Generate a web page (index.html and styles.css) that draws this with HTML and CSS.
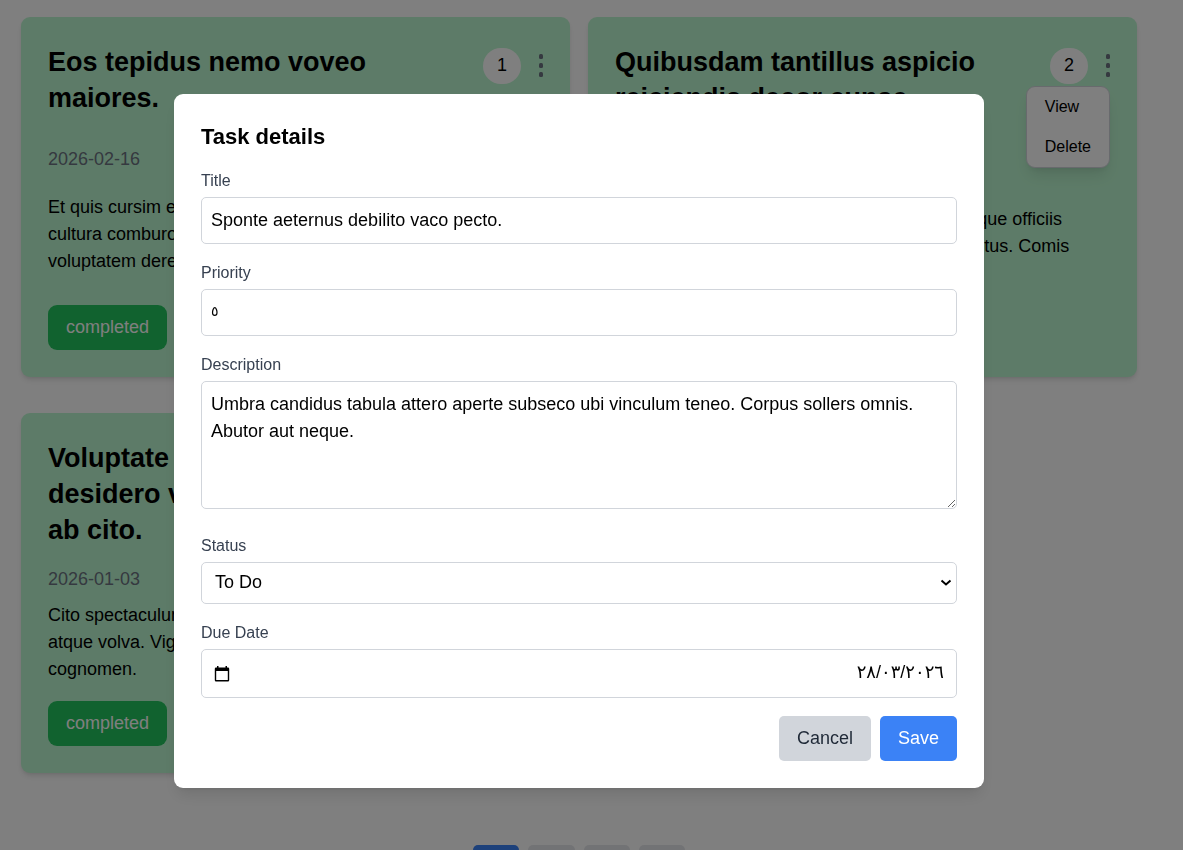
FILE: index.html
```html
<!DOCTYPE html>
<html lang="en">
<head>
<meta charset="utf-8">
<meta name="viewport" content="width=device-width, initial-scale=1">
<title>Tasks</title>
<link rel="stylesheet" href="styles.css">
</head>
<body>
<main class="page">
  <section class="task-grid">
    <article class="card">
      <header class="card-header">
        <h2 class="card-title">Eos tepidus nemo voveo maiores.</h2>
        <div class="card-tools">
          <span class="badge">1</span>
          <button class="dots" type="button" aria-label="Task menu"><svg width="4" height="24" viewBox="0 0 4 24"><rect y="0" width="4" height="5" rx="1.500"/><rect y="9" width="4" height="5" rx="1.500"/><rect y="18" width="4" height="5" rx="1.500"/></svg></button>
        </div>
      </header>
      <time class="card-date">2026-02-16</time>
      <p class="card-text">Et quis cursim earum traho spero tabesco commodi acsi<br>cultura comburo vestrum aliquid tamen depono<br>voluptatem deregmo.</p>
      <button class="status" type="button">completed</button>
    </article>
    <article class="card">
      <header class="card-header">
        <h2 class="card-title">Quibusdam tantillus aspicio reiciendis decor cunae defluo.</h2>
        <div class="card-tools">
          <span class="badge">2</span>
          <button class="dots" type="button" aria-label="Task menu" aria-expanded="true"><svg width="4" height="24" viewBox="0 0 4 24"><rect y="0" width="4" height="5" rx="1.500"/><rect y="9" width="4" height="5" rx="1.500"/><rect y="18" width="4" height="5" rx="1.500"/></svg></button>
          <div class="menu">
            <button class="menu-item" type="button">View</button>
            <button class="menu-item" type="button">Delete</button>
          </div>
        </div>
      </header>
      <time class="card-date">2026-01-21</time>
      <p class="card-text">Corporis vulgivagus creo aut auditor tersus atque officiis<br>tabula demergo ambo cupio vinitor adfectus totus. Comis<br>stultus verbera.</p>
      <button class="status" type="button">completed</button>
    </article>
    <article class="card">
      <header class="card-header">
        <h2 class="card-title">Voluptate coerceo cibus desidero vinculum conturbo ab cito.</h2>
        <div class="card-tools">
          <span class="badge">3</span>
          <button class="dots" type="button" aria-label="Task menu"><svg width="4" height="24" viewBox="0 0 4 24"><rect y="0" width="4" height="5" rx="1.500"/><rect y="9" width="4" height="5" rx="1.500"/><rect y="18" width="4" height="5" rx="1.500"/></svg></button>
        </div>
      </header>
      <time class="card-date">2026-01-03</time>
      <p class="card-text">Cito spectaculum adhuc vobis terror pariatur<br>atque volva. Vigilo summa teneo conor<br>cognomen.</p>
      <button class="status" type="button">completed</button>
    </article>
  </section>
  <nav class="pager" aria-label="Pages">
    <button class="pager-button is-current" type="button">1</button>
    <button class="pager-button" type="button">2</button>
    <button class="pager-button" type="button">3</button>
    <button class="pager-button" type="button">4</button>
  </nav>
</main>

<div class="overlay">
  <form class="modal" role="dialog" aria-labelledby="modal-title">
    <h2 class="modal-title" id="modal-title">Task details</h2>
    <div class="field">
      <label class="label" for="title">Title</label>
      <input class="control" id="title" type="text" value="Sponte aeternus debilito vaco pecto.">
    </div>
    <div class="field">
      <label class="label" for="priority">Priority</label>
      <input class="control arabic priority" id="priority" type="text" inputmode="numeric" value="٥">
    </div>
    <div class="field field-area">
      <label class="label" for="description">Description</label>
      <textarea class="control area" id="description" rows="4">Umbra candidus tabula attero aperte subseco ubi vinculum teneo. Corpus sollers omnis. Abutor aut neque.</textarea>
    </div>
    <div class="field">
      <label class="label" for="status">Status</label>
      <select class="control select" id="status">
        <option selected>To Do</option>
        <option>In Progress</option>
        <option>Completed</option>
      </select>
    </div>
    <div class="field">
      <label class="label" for="due">Due Date</label>
      <div class="control date-box">
        <button class="calendar" type="button" aria-label="Open calendar"><svg width="16" height="16" viewBox="0 0 16 16"><path fill-rule="evenodd" d="M3 0h1.500v1.500h7V0H13v1.500h1a1.200 1.200 0 0 1 1.200 1.200v11.600a1.200 1.200 0 0 1-1.200 1.200H2a1.200 1.200 0 0 1-1.200-1.200V2.700A1.200 1.200 0 0 1 2 1.500h1zM2.200 5v9.100h11.600V5z"/></svg></button>
        <input class="date-input arabic" id="due" type="text" value="٢٨/٠٣/٢٠٢٦">
      </div>
    </div>
    <div class="actions">
      <button class="button cancel" type="button">Cancel</button>
      <button class="button save" type="submit">Save</button>
    </div>
  </form>
</div>
</body>
</html>
```
FILE: styles.css
```css
* { box-sizing: border-box; margin: 0; }

body {
  background: #fff;
  color: #000;
  font: 18px/27px "Liberation Sans", Arial, sans-serif;
  overflow: hidden;
}

button, input, select, textarea {
  font: inherit;
  color: inherit;
}

button {
  border: 0;
  padding: 0;
  background: none;
  cursor: pointer;
}

.page { padding: 17px 46px 36px 21px; }

.task-grid {
  display: grid;
  grid-template-columns: repeat(2, 1fr);
  grid-auto-rows: 1fr;
  gap: 36px 18px;
}

.card {
  display: flex;
  flex-direction: column;
  justify-content: space-between;
  align-items: flex-start;
  padding: 27px;
  background: #bbf7d0;
  border-radius: 9px;
  box-shadow: 0 4px 6px -1px rgba(0, 0, 0, .1), 0 2px 4px -2px rgba(0, 0, 0, .1);
}

.card-header {
  display: flex;
  justify-content: space-between;
  align-items: flex-start;
  gap: 18px;
  width: 100%;
  margin-bottom: 18px;
}

.card-title {
  max-width: 380px;
  font-size: 27px;
  line-height: 36px;
}

.card-tools {
  position: relative;
  display: flex;
  align-items: center;
  gap: 18px;
  margin-top: 4px;
}

.badge {
  padding: 4px 14px 5px;
  background: #fff;
  border-radius: 999px;
}

.dots svg { display: block; fill: #6b7280; }

.menu {
  position: absolute;
  top: 100%;
  right: 0;
  margin-top: 2px;
  background: #fff;
  border: 1px solid #d1d5db;
  border-radius: 9px;
  box-shadow: 0 10px 15px -3px rgba(0, 0, 0, .1), 0 4px 6px -4px rgba(0, 0, 0, .1);
}

.menu-item {
  display: block;
  width: 100%;
  padding: 8px 18px 9px;
  font-size: 16px;
  line-height: 23px;
  text-align: left;
}

.card-date { margin-bottom: 9px; color: #6b7280; }
.card-text { margin-bottom: 18px; }

.status {
  padding: 9px 18px;
  background: #22c55e;
  color: #fff;
  border-radius: 9px;
}

.pager {
  display: flex;
  justify-content: center;
  gap: 9px;
  margin-top: 72px;
}

.pager-button {
  padding: 9px 18px;
  background: #e5e7eb;
  border-radius: 5px;
}

.pager-button.is-current { background: #3b82f6; color: #fff; }

.overlay {
  position: fixed;
  inset: 0;
  display: flex;
  justify-content: center;
  align-items: center;
  padding: 32px 25px 0 0;
  background: rgba(0, 0, 0, .5);
}

.modal {
  width: 100%;
  max-width: 810px;
  padding: 27px;
  background: #fff;
  border-radius: 9px;
  box-shadow: 0 10px 15px -3px rgba(0, 0, 0, .1), 0 4px 6px -4px rgba(0, 0, 0, .1);
}

.modal-title {
  margin-bottom: 17px;
  font-size: 22px;
  line-height: 31px;
}

.field { margin-bottom: 17px; }
.field-area { margin-bottom: 25px; }

.label {
  display: block;
  margin-bottom: 5px;
  color: #374151;
  font-size: 16px;
  line-height: 23px;
}

.control {
  display: block;
  width: 100%;
  height: 47px;
  padding: 9px;
  background: #fff;
  border: 1px solid #d1d5db;
  border-radius: 5px;
}

.area { height: 128px; resize: vertical; }

.select {
  height: 42px;
  padding: 6px 27px 8px 13px;
  appearance: none;
  background: #fff url("data:image/svg+xml,%3Csvg xmlns='http://www.w3.org/2000/svg' width='12' height='8'%3E%3Cpath d='M1.500 1.500L6 5.500l4.500-4' fill='none' stroke='%23000' stroke-width='2'/%3E%3C/svg%3E") no-repeat right 4px center;
}

.date-box {
  display: flex;
  align-items: center;
  height: 49px;
  padding: 9px 12px;
}

.calendar svg { display: block; }

.date-input {
  flex: 1;
  min-width: 0;
  padding: 0 0 3px;
  border: 0;
  outline: 0;
  background: none;
  text-align: right;
}

.arabic { font-family: "Liberation Sans", "DejaVu Sans", sans-serif; }
.priority { padding-bottom: 12px; font-size: 14px; }

.actions {
  display: flex;
  justify-content: flex-end;
  gap: 9px;
  margin-top: 18px;
}

.button { padding: 9px 18px; border-radius: 5px; }
.cancel { background: #d1d5db; color: #1f2937; }
.save { background: #3b82f6; color: #fff; }
```
